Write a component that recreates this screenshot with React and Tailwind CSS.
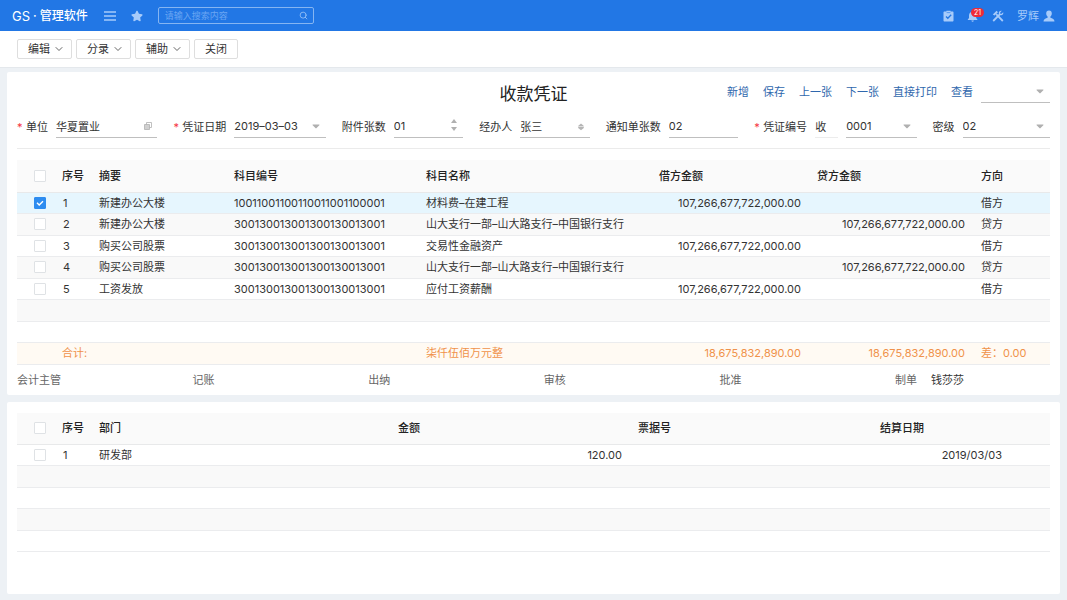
import React, { useState } from "react";
import { FiSearch, FiChevronDown } from "react-icons/fi";
import { FaStar, FaCaretDown } from "react-icons/fa";

const menus = ["编辑", "分录", "辅助"];
const actions = ["新增", "保存", "上一张", "下一张", "直接打印", "查看"];

const entries = [
  { id: 1, summary: "新建办公大楼", code: "10011001100110011001100001", name: "材料费–在建工程", debit: "107,266,677,722,000.00", credit: "", direction: "借方" },
  { id: 2, summary: "新建办公大楼", code: "300130013001300130013001", name: "山大支行一部–山大路支行–中国银行支行", debit: "", credit: "107,266,677,722,000.00", direction: "贷方" },
  { id: 3, summary: "购买公司股票", code: "300130013001300130013001", name: "交易性金融资产", debit: "107,266,677,722,000.00", credit: "", direction: "借方" },
  { id: 4, summary: "购买公司股票", code: "300130013001300130013001", name: "山大支行一部–山大路支行–中国银行支行", debit: "", credit: "107,266,677,722,000.00", direction: "贷方" },
  { id: 5, summary: "工资发放", code: "300130013001300130013001", name: "应付工资薪酬", debit: "107,266,677,722,000.00", credit: "", direction: "借方" },
];

const signers = [
  { role: "会计主管" },
  { role: "记账" },
  { role: "出纳" },
  { role: "审核" },
  { role: "批准" },
  { role: "制单", person: "钱莎莎" },
];

const Checkbox = ({ label, checked, onChange }) => (
  <span className="relative block w-3 h-3 ml-[17px]">
    <input
      type="checkbox"
      aria-label={label}
      checked={checked}
      onChange={onChange}
      className="peer block appearance-none w-3 h-3 rounded-[1px] border border-[#dfe2e5] bg-white checked:bg-[#2d8cf0] checked:border-[#2d8cf0]"
    />
    <svg
      viewBox="0 0 12 12"
      className="absolute inset-0 w-3 h-3 hidden peer-checked:block pointer-events-none"
      fill="none"
      stroke="white"
      strokeWidth="1.4"
    >
      <path d="M3 5.8 L5.2 8 L9 4.2" />
    </svg>
  </span>
);

const Field = ({ id, label, required, children }) => (
  <div className="flex flex-auto items-center min-w-0">
    {required && <span className="w-[9px] text-[#f5333f]">*</span>}
    <label htmlFor={id} className="mr-2 whitespace-nowrap">
      {label}
    </label>
    {children}
  </div>
);

const Select = ({ id, label, value, className }) => (
  <div className={"relative grow " + className}>
    <select
      id={id}
      aria-label={label}
      defaultValue={value}
      className="block w-full h-[22px] appearance-none border-b border-[#bfbfbf] outline-none"
    >
      <option>{value}</option>
    </select>
    <FaCaretDown className="absolute right-1 top-1 w-3 h-3 text-[#b0b0b0] pointer-events-none" />
  </div>
);

const Input = ({ id, value, className, children }) => (
  <div className={"relative grow " + className}>
    <input
      id={id}
      type="text"
      defaultValue={value}
      className="block w-full h-[22px] border-b border-[#bfbfbf] outline-none"
    />
    {children}
  </div>
);

const headRow = "h-8 bg-[#fafafa] border-b border-[#e8e9ea] text-[#222]";
const bodyRow = "h-[21px] even:h-[22px] border-b border-[#ebecee] even:bg-[#f9f9f9]";

const TopBar = () => (
  <header className="flex items-center h-[31px] pl-3 pr-3 bg-[#2277e5] text-[#a7cbfa]">
    <h1 className="flex items-center gap-[3px] text-[12px] font-medium text-white whitespace-nowrap">
      <span className="text-[13px] font-normal">GS</span>
      <span>·</span>
      <span>管理软件</span>
    </h1>
    <button aria-label="菜单" className="ml-4">
      <svg viewBox="0 0 12 10" className="w-3 h-[10px]" stroke="currentColor" strokeWidth="1.5">
        <path d="M0 1H12M0 5H12M0 9H12" />
      </svg>
    </button>
    <button aria-label="收藏" className="ml-[15px]">
      <FaStar className="w-3 h-3" />
    </button>
    <div className="flex items-center w-[156px] h-[17px] ml-[15px] px-[5px] rounded-[2px] border border-[#85b5f2]">
      <input
        type="search"
        aria-label="搜索"
        placeholder="请输入搜索内容"
        className="w-full min-w-0 pl-px text-[9px] text-white placeholder:text-[#6ba6f3] outline-none"
      />
      <button aria-label="搜索">
        <FiSearch className="w-[9px] h-[9px]" />
      </button>
    </div>
    <div className="flex items-center gap-[13px] ml-auto">
      <button aria-label="任务">
        <svg viewBox="0 0 11 12" className="w-[11px] h-3">
          <path
            d="M1.5 1.5H3.4V0.8H7.6V1.5H9.5C10.1 1.5 10.5 1.9 10.5 2.5V10.5C10.5 11.1 10.1 11.5 9.5 11.5H1.5C0.9 11.5 0.5 11.1 0.5 10.5V2.5C0.5 1.9 0.9 1.5 1.5 1.5Z"
            fill="currentColor"
          />
          <path d="M3 6.5L4.8 8.3L8.2 4.7" fill="none" stroke="#2277e5" strokeWidth="1.3" />
          <path d="M3.6 2.6H7.4" stroke="#2277e5" strokeWidth="0.6" />
        </svg>
      </button>
      <button aria-label="通知" className="relative">
        <svg viewBox="0 0 12 12" className="w-3 h-3" fill="currentColor">
          <path d="M5 0.8H6V1.8C8 2.2 9.2 3.7 9.2 5.6V8L10.4 9.4V10H0.8V9.4L2 8V5.6C2 3.7 3.1 2.2 5 1.8Z" />
          <path d="M4.3 10.5H6.9C6.7 11.3 6.2 11.7 5.6 11.7C5 11.7 4.5 11.3 4.3 10.5Z" />
        </svg>
        <span className="absolute left-1 -top-[2px] w-[13px] h-[9px] rounded-full bg-[#ee2b38] text-white text-[7px] leading-[9px] text-center">
          21
        </span>
      </button>
      <button aria-label="工具">
        <svg viewBox="0 0 12 12" className="w-3 h-3" fill="none" stroke="currentColor">
          <path d="M4.2 4.2L10.8 11" strokeWidth="1.8" />
          <path d="M0.8 4.6L4.6 0.8L6 2.2L2.6 5.6Z" fill="currentColor" stroke="none" />
          <path d="M1.2 11L8 4.2" strokeWidth="1.8" />
          <path d="M9.8 0.8L8.2 2.4V3.8H9.6L11.2 2.2C11.8 3.8 10.4 5.6 8.4 5.2L6.8 3.6C6.4 1.6 8.2 0.2 9.8 0.8Z" fill="currentColor" stroke="none" />
        </svg>
      </button>
      <button className="flex items-center gap-1 text-[11px]">
        罗辉
        <svg viewBox="0 0 12 12" className="w-3 h-3" fill="currentColor">
          <path d="M6 0.5C7.9 0.5 8.8 1.8 8.8 3.5C8.8 4.9 8.2 6 7.4 6.6V7.7C9.4 8.3 11.5 9 11.5 11.5H0.5C0.5 9 2.6 8.3 4.6 7.7V6.6C3.8 6 3.2 4.9 3.2 3.5C3.2 1.8 4.1 0.5 6 0.5Z" />
        </svg>
      </button>
    </div>
  </header>
);

const VoucherForm = () => (
  <form className="flex items-center gap-4 h-[44px] border-b border-[#ebebeb]">
    <Field id="unit" label="单位" required>
      <Input id="unit" value="华夏置业" className="w-[102px]">
        <svg viewBox="0 0 8 8" className="absolute right-[5px] top-[6px] w-2 h-2 text-[#b0b0b0]" fill="none" stroke="currentColor" strokeWidth="0.8">
          <path d="M2.5 2.5V0.5H7.5V5.5H5.5" />
          <path d="M0.5 2.5H5.5V7.5H0.5Z" fill="currentColor" fillOpacity="0.6" />
        </svg>
      </Input>
    </Field>
    <Field id="date" label="凭证日期" required>
      <Select id="date" value="2019–03–03" className="w-[92px]" />
    </Field>
    <Field id="attachments" label="附件张数">
      <Input id="attachments" value="01" className="w-[70px]">
        <div className="absolute right-[6px] top-[3px] flex flex-col gap-1 text-[#b0b0b0]">
          <button type="button" aria-label="增加">
            <svg viewBox="0 0 6 4" className="w-[6px] h-1" fill="currentColor">
              <path d="M3 0L6 4H0Z" />
            </svg>
          </button>
          <button type="button" aria-label="减少">
            <svg viewBox="0 0 6 4" className="w-[6px] h-1" fill="currentColor">
              <path d="M3 4L6 0H0Z" />
            </svg>
          </button>
        </div>
      </Input>
    </Field>
    <Field id="handler" label="经办人">
      <Input id="handler" value="张三" className="w-[70px]">
        <svg viewBox="0 0 8 8" className="absolute right-[5px] top-[7px] w-2 h-2 text-[#b5b5b5]" fill="currentColor">
          <path d="M4 0.6L7.2 3.2H0.8Z" />
          <path d="M1.2 3.7H6.8V4.9L4 7.2L1.2 4.9Z" />
        </svg>
      </Input>
    </Field>
    <Field id="notices" label="通知单张数">
      <Input id="notices" value="02" className="w-[70px]" />
    </Field>
    <Field id="number" label="凭证编号" required>
      <input
        aria-label="凭证字"
        defaultValue="收"
        className="w-[23px] h-[22px] mr-2 border-b border-[#ececec] outline-none"
      />
      <Select id="number" value="0001" className="w-[71px]" />
    </Field>
    <Field id="level" label="密级">
      <Select id="level" value="02" className="w-[88px]" />
    </Field>
  </form>
);

const EntryTable = () => {
  const [selected, setSelected] = useState([1]);

  const toggle = (id) => {
    setSelected(selected.includes(id) ? selected.filter((s) => s !== id) : [...selected, id]);
  };

  const toggleAll = () => {
    setSelected(selected.length === entries.length ? [] : entries.map((e) => e.id));
  };

  return (
    <table className="w-full mt-[11px] table-fixed border-collapse text-left">
      <colgroup>
        <col className="w-[45px]" />
        <col className="w-[37px]" />
        <col className="w-[135px]" />
        <col className="w-[192px]" />
        <col />
        <col className="w-[142px]" />
        <col className="w-[164px]" />
        <col className="w-[85px]" />
      </colgroup>
      <thead>
        <tr className={headRow}>
          <th>
            <Checkbox label="全选" checked={selected.length === entries.length} onChange={toggleAll} />
          </th>
          <th className="font-medium">序号</th>
          <th className="font-medium">摘要</th>
          <th className="font-medium">科目编号</th>
          <th className="font-medium">科目名称</th>
          <th className="font-medium">借方金额</th>
          <th className="font-medium pl-4">贷方金额</th>
          <th className="font-medium pl-4">方向</th>
        </tr>
      </thead>
      <tbody>
        {entries.map((entry) => (
          <tr
            key={entry.id}
            className={bodyRow + (selected.includes(entry.id) ? " bg-[#e6f6fe] even:bg-[#e6f6fe]" : "")}
          >
            <td>
              <Checkbox
                label={"选择第" + entry.id + "行"}
                checked={selected.includes(entry.id)}
                onChange={() => toggle(entry.id)}
              />
            </td>
            <td className="pl-px">{entry.id}</td>
            <td>{entry.summary}</td>
            <td>{entry.code}</td>
            <td className="whitespace-nowrap">{entry.name}</td>
            <td className="text-right">{entry.debit}</td>
            <td className="text-right">{entry.credit}</td>
            <td className="pl-4">{entry.direction}</td>
          </tr>
        ))}
        <tr className={bodyRow}>
          <td colSpan={8}></td>
        </tr>
        <tr className={bodyRow}>
          <td colSpan={8}></td>
        </tr>
      </tbody>
      <tfoot>
        <tr className="h-[22px] bg-[#fffaf3] border-b border-[#ebecee] text-[#f0924a]">
          <td></td>
          <td colSpan={3}>合计:</td>
          <td>柒仟伍佰万元整</td>
          <td className="text-right">18,675,832,890.00</td>
          <td className="text-right">18,675,832,890.00</td>
          <td className="pl-4 whitespace-nowrap">差：0.00</td>
        </tr>
      </tfoot>
    </table>
  );
};

const SettlementTable = () => {
  const [checked, setChecked] = useState(false);
  const toggle = () => setChecked(!checked);

  return (
    <table className="w-full table-fixed border-collapse text-left">
      <colgroup>
        <col className="w-[45px]" />
        <col className="w-[37px]" />
        <col />
        <col className="w-[224px]" />
        <col className="w-[242px]" />
        <col className="w-[186px]" />
      </colgroup>
      <thead>
        <tr className={headRow}>
          <th>
            <Checkbox label="全选" checked={checked} onChange={toggle} />
          </th>
          <th className="font-medium">序号</th>
          <th className="font-medium">部门</th>
          <th className="font-medium">金额</th>
          <th className="font-medium pl-4">票据号</th>
          <th className="font-medium pl-4">结算日期</th>
        </tr>
      </thead>
      <tbody>
        <tr className={bodyRow}>
          <td>
            <Checkbox label="选择第1行" checked={checked} onChange={toggle} />
          </td>
          <td className="pl-px">1</td>
          <td>研发部</td>
          <td className="text-right">120.00</td>
          <td></td>
          <td className="text-right pr-12">2019/03/03</td>
        </tr>
        {[2, 3, 4, 5].map((row) => (
          <tr key={row} className={bodyRow}>
            <td colSpan={6}></td>
          </tr>
        ))}
      </tbody>
    </table>
  );
};

export default function App() {
  return (
    <div className="flex flex-col min-h-screen bg-[#edf1f5] font-[Inter,'Noto_Sans_CJK_SC',sans-serif] text-[11px] leading-4 text-[#333]">
      <TopBar />

      {/* Toolbar */}
      <nav className="flex items-center gap-1 h-[37px] px-[17px] bg-white border-b border-[#e4e8ec]">
        {menus.map((menu) => (
          <button key={menu} className="flex items-center gap-[3px] h-5 pl-[10px] pr-[6px] rounded-[2px] border border-[#dedede]">
            {menu}
            <FiChevronDown className="w-3 h-3" strokeWidth="1.5" />
          </button>
        ))}
        <button className="h-5 px-[10px] rounded-[2px] border border-[#dedede]">关闭</button>
      </nav>

      <main className="flex flex-col grow gap-[7px] px-[7px] pt-1 pb-[6px]">
        <section className="px-[10px] bg-white rounded-[2px]">
          <div className="grid grid-cols-[1fr_auto_1fr] items-center h-[33px] pt-2">
            <h2 className="col-start-2 pt-[2px] text-[17px] leading-6 text-[#222]">收款凭证</h2>
            <div className="flex items-center justify-end gap-[14px] pb-[2px]">
              {actions.map((action) => (
                <a key={action} href="#" className="text-[#2f67ad] whitespace-nowrap">
                  {action}
                </a>
              ))}
              <div className="flex w-[69px] -ml-[6px]">
                <Select label="查看方式" value="" className="w-full" />
              </div>
            </div>
          </div>

          <VoucherForm />
          <EntryTable />

          {/* Signatures */}
          <div className="grid grid-cols-[repeat(5,17%)_1fr] items-center h-[30px] text-[#666]">
            {signers.map((signer) => (
              <div key={signer.role}>
                {signer.role}
                {signer.person && <span className="ml-[14px] text-[#333]">{signer.person}</span>}
              </div>
            ))}
          </div>
        </section>

        <section className="grow px-[10px] pt-[11px] bg-white rounded-[2px]">
          <SettlementTable />
        </section>
      </main>
    </div>
  );
}
